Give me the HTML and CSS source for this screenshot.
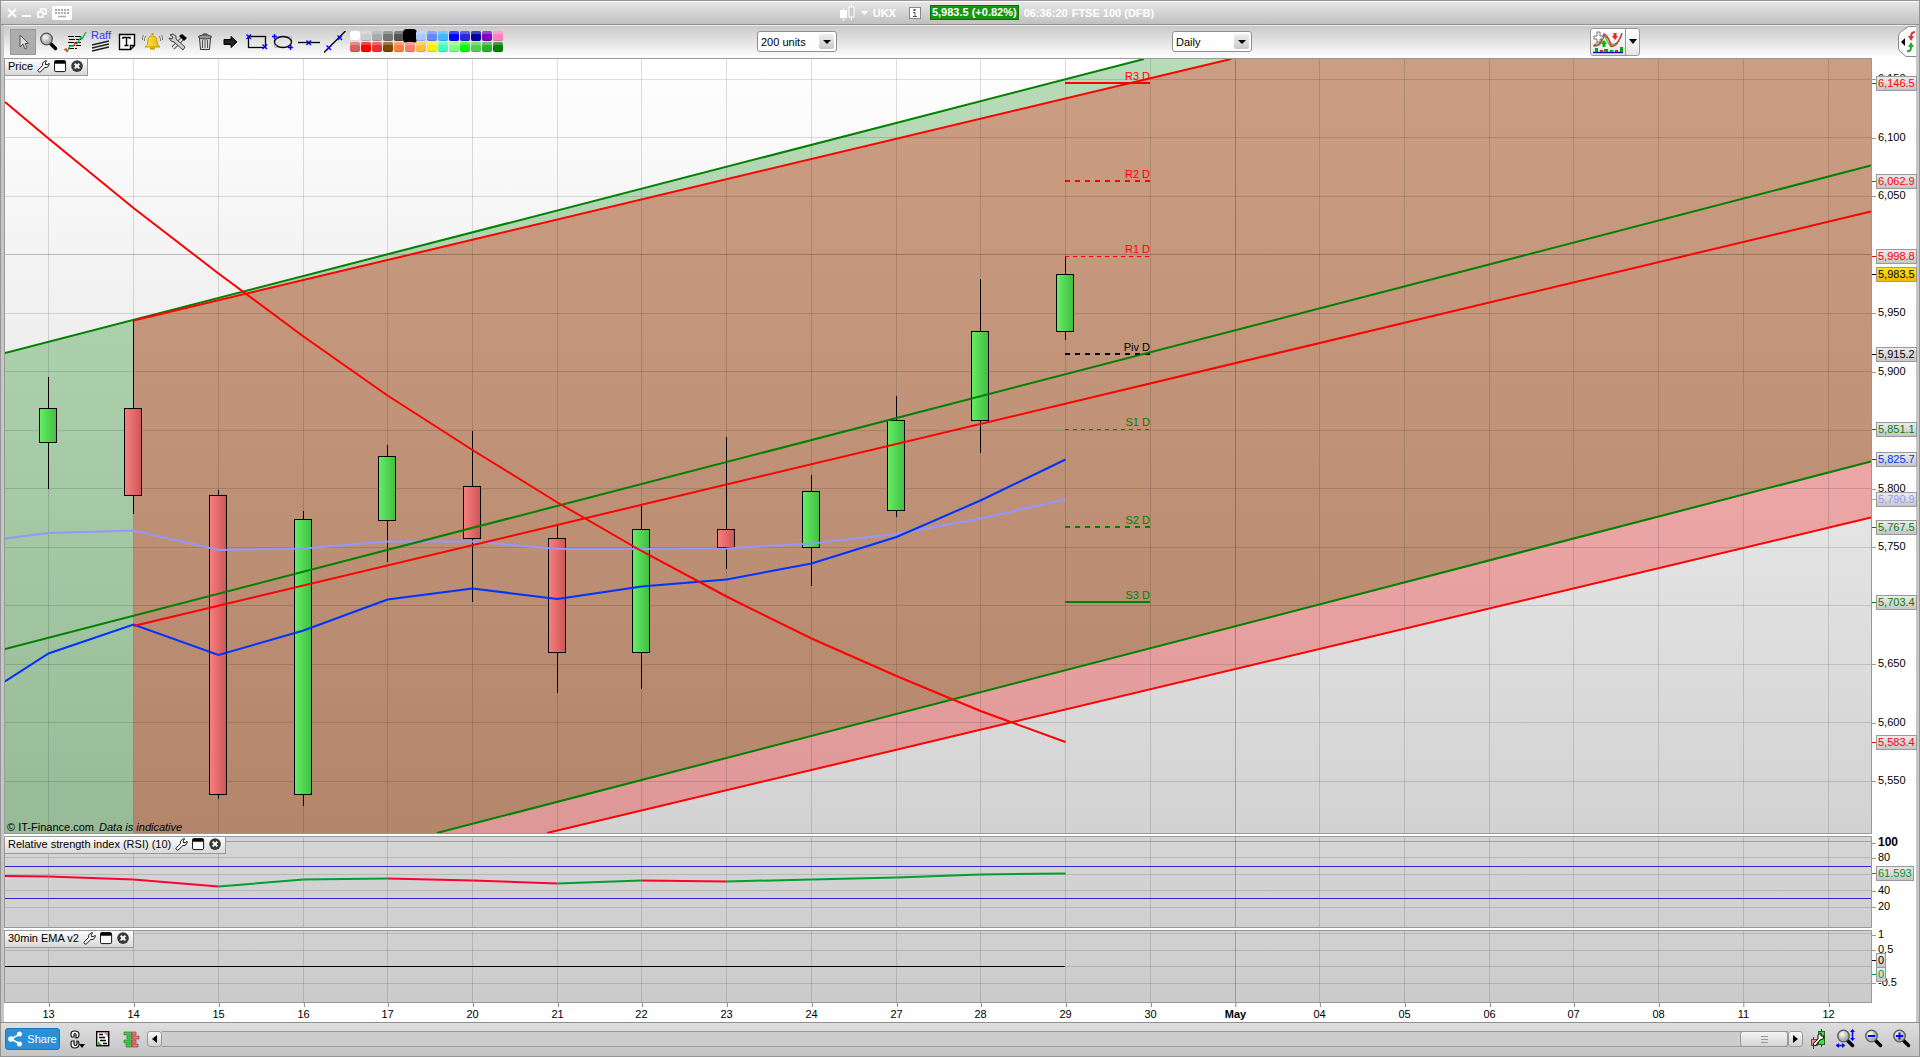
FILE: index.html
```html
<!DOCTYPE html>
<html lang="en">
<head>
  <meta charset="UTF-8">
  <meta name="viewport" content="width=device-width, initial-scale=1.0">
  <title>FTSE 100 (DFB)</title>
  <link rel="stylesheet" href="styles.css">
</head>
<body>
  <!-- shared icons -->
  <svg class="defs" width="0" height="0">
    <defs>
      <linearGradient id="up"><stop offset="0" stop-color="#66ee66"/><stop offset="1" stop-color="#40be40"/></linearGradient>
      <linearGradient id="down"><stop offset="0" stop-color="#fa8080"/><stop offset="1" stop-color="#cc5555"/></linearGradient>
      <radialGradient id="lens" cx=".4" cy=".35"><stop offset="0" stop-color="#fff"/><stop offset="1" stop-color="#aaa"/></radialGradient>
      <linearGradient id="gold" x1="0" x2="1"><stop offset="0" stop-color="#ffe45a"/><stop offset="1" stop-color="#eeb800"/></linearGradient>
      <symbol id="wrench" viewBox="0 0 14 14"><path d="M1.5 10.5L6 6V3.5L8.5 1H10.5L9 2.5V5H11.5L13 3.5V5.5L11 8H8.500L4 12.500Q2.500 13.500 1.500 12.500Q.5 11.500 1.500 10.500Z" fill="#fff" stroke="#000"/></symbol>
      <symbol id="pane" viewBox="0 0 14 14"><rect x=".5" y=".5" width="12" height="12" rx="1.500" fill="#fff" stroke="#000"/><path d="M1 1H12V4H1Z" fill="#000"/></symbol>
      <symbol id="close" viewBox="0 0 14 14"><circle cx="6.500" cy="6.500" r="6.300" fill="#3a3a3a"/><path d="M4 4L9 9M9 4L4 9" stroke="#fff" stroke-width="2.200"/></symbol>
      <symbol id="glass" viewBox="0 0 20 20"><path d="M11 11L16.500 16.500" stroke="#000" stroke-width="3.500" stroke-linecap="round"/><circle cx="7.500" cy="7" r="5.800" fill="url(#lens)" stroke="#555" stroke-width="1.300"/></symbol>
      <symbol id="cross" viewBox="0 0 6 6"><path d="M.5 .5L5 5M5 .5L.5 5" stroke="#00f" stroke-width="1.400"/></symbol>
    </defs>
  </svg>

  <div class="window">
    <header class="titlebar">
      <div class="winbtns">
        <button aria-label="Close"><svg width="10" height="10"><path d="M1 1L9 9M9 1L1 9" stroke="#fff" stroke-width="2"/></svg></button>
        <button aria-label="Minimize"><svg width="10" height="10"><path d="M0 8H9" stroke="#fff" stroke-width="2"/></svg></button>
        <button aria-label="Restore"><svg width="10" height="10" fill="none" stroke="#fff" stroke-width="1.500"><path d="M3.500 4V1H9V6H6"/><path d="M1 4H6V9H1Z"/></svg></button>
        <button aria-label="Keyboard"><svg width="20" height="14"><rect width="20" height="14" rx="2" fill="#fff"/><path d="M3 4H17M3 7H17" stroke="#aaa" stroke-width="2" stroke-dasharray="2 1"/><path d="M6 10.500H14" stroke="#aaa" stroke-width="1.500"/></svg></button>
      </div>
      <div class="quote">
        <svg width="16" height="17"><path d="M3.500 4V17M11.500 0V16" stroke="#fff"/><rect y="6" width="7" height="8" fill="#fff"/><rect x="9" y="3" width="5" height="10" fill="#ccc" stroke="#fff"/></svg>
        <svg class="down" width="7" height="4"><path d="M0 0H7L3.500 4Z" fill="#fff"/></svg>
        <span class="symbol">UKX</span>
        <svg class="info" width="12" height="12"><rect x=".5" y=".5" width="11" height="11" fill="#fff" stroke="#888"/><path d="M5.500 2V4" stroke="#555" stroke-width="2"/><path d="M4 5.500H6V9M4 9.500H8" fill="none" stroke="#555"/></svg>
        <span class="change">5,983.5 (+0.82%)</span>
        <span class="clock">06:36:20</span>
        <span>FTSE 100 (DFB)</span>
      </div>
    </header>

    <div class="toolbar">
      <div class="tools">
        <button class="tool on" aria-label="Pointer"><svg width="20" height="20"><path d="M7 3V15L10 12L12 17L14 16L12 11.500H15.500Z" fill="#ddd" stroke="#555"/></svg></button>
        <button class="tool" aria-label="Zoom"><svg width="20" height="20"><use href="#glass"/></svg></button>
        <button class="tool" aria-label="Chart list"><svg width="24" height="22"><path d="M5 5.500H19M6 8.500H18M5 11.500H19M6 14.500H18M5 17.500H14" stroke="#000" stroke-dasharray="6 1"/><path d="M1 19L3 18L4 21M11 15L12 12L14 13" fill="none" stroke="#f22" stroke-width="1.300"/><path d="M4 21L7 15L11 15M14 13L18 6L19 8L23 1" fill="none" stroke="#1b3" stroke-width="1.400"/></svg></button>
        <button class="tool raff" aria-label="Raff channel"><span>Raff</span><svg width="20" height="12"><path d="M1 5L18 1M1 8L18 4M1 11L18 7" stroke="#222" stroke-width="1.300"/></svg></button>
        <button class="tool" aria-label="Text"><svg width="18" height="18"><path d="M1.500 1.500H16.500V12.500L12.500 16.500H1.500Z" fill="#fff" stroke="#000" stroke-width="1.400"/><path d="M12.500 16.500V12.500H16.500M5 6V4.500H12V6M8.500 4.500V12M6.500 12.500H10.500" fill="none" stroke="#000" stroke-width="1.400"/></svg></button>
        <button class="tool" aria-label="Alert"><svg width="22" height="18"><path d="M3 14Q6 12 6 8Q6 3 10 3Q15 3 15 8Q15 12 18 14Z" fill="url(#gold)" stroke="#c90"/><path d="M8 15.500H13" stroke="#c90" stroke-width="2"/><path d="M9.500 1H11.500" stroke="#c90" stroke-width="2"/><path d="M4 3Q2 5 2.500 8M1.500 2Q0 4 .5 7M17 3Q19 5 18.500 8M19.500 2Q21 4 20.500 7" fill="none" stroke="#777"/></svg></button>
        <button class="tool" aria-label="Settings"><svg width="22" height="18"><path d="M5 15L14 6" stroke="#555" stroke-width="4"/><path d="M5 15L14 6" stroke="#eee" stroke-width="2"/><path d="M2 2L5 1L8 3V6L17 14L15 17L6 9L3 8L1 5L4 6L5 4Z" fill="#ccc" stroke="#444"/><path d="M11 3L14 1L19 5L16 8L13 5Z" fill="#000"/></svg></button>
        <button class="tool" aria-label="Delete"><svg width="16" height="18"><path d="M2.500 5L3.500 16.500H12.500L13.500 5" fill="#ddd" stroke="#333"/><path d="M5.500 7V15M8 7V15M10.500 7V15" stroke="#555"/><ellipse cx="8" cy="4" rx="6.500" ry="2" fill="#999" stroke="#333"/><path d="M6 2V1H10V2" fill="none" stroke="#333"/></svg></button>
        <button class="tool" aria-label="Arrow"><svg width="16" height="12"><path d="M1 3.500H8V.5L14 6L8 11.500V8.500H1Z" fill="#222" stroke="#000"/></svg></button>
        <button class="tool" aria-label="Rectangle"><svg width="22" height="16"><rect x="2.500" y="2.500" width="17" height="11" fill="none" stroke="#000" stroke-width="1.300"/><use href="#cross" width="6" height="6"/><use href="#cross" x="16" y="10" width="6" height="6"/></svg></button>
        <button class="tool" aria-label="Ellipse"><svg width="22" height="16"><path d="M2.500 2.500H19.500V13.500H2.500Z" fill="none" stroke="#bbb"/><ellipse cx="11" cy="8" rx="8.500" ry="5.500" fill="none" stroke="#000" stroke-width="1.300"/><path d="M0 2.500H5M2.500 0V5M16 13.500H21M18.500 11V16" stroke="#00f" stroke-width="1.300"/></svg></button>
        <button class="tool" aria-label="Horizontal line"><svg width="22" height="16"><path d="M0 8.500H22" stroke="#000" stroke-width="1.300"/><use href="#cross" x="8" y="6" width="6" height="6"/></svg></button>
        <button class="tool" aria-label="Trend line"><svg width="22" height="22"><path d="M0 21.500L21.500 0" stroke="#000" stroke-width="1.300"/><use href="#cross" x="2" y="14" width="6" height="6"/><use href="#cross" x="13" y="4" width="6" height="6"/></svg></button>
        <div class="palette" id="palette"></div>
      </div>
      <label class="pick"><select aria-label="Units"><option>200 units</option></select><i></i></label>
      <label class="pick"><select aria-label="Interval"><option>Daily</option></select><i></i></label>
      <div class="right">
        <div class="split">
          <button aria-label="Indicators"><svg width="32" height="24"><path d="M1 16Q7 18 12 5Q15 12 19 17Q25 16 30 4Q26 16 19 14Q16 5 11 7Q6 12 1 16" fill="#bdb" stroke="#3a3"/><path d="M2 15Q9 18 12 4Q16 5 19 16Q25 18 30 3" fill="none" stroke="#d33" stroke-width="1.400"/><path d="M5 2H8V6H11V9H8V12H5V9H2V6H5Z" fill="#fff" stroke="#777"/><path d="M23 3V7" stroke="#e22" stroke-width="3"/><path d="M20 6H26L23 10Z" fill="#e22"/><path d="M12 13V17" stroke="#0b0" stroke-width="3"/><path d="M9 14H15L12 10Z" fill="#0b0"/><path d="M1 22.500H31" stroke="#11b" stroke-width="1.500"/><path d="M3 18H6V22H3ZM12 19H16V22H12ZM18 20H21V22H18ZM28 17H31V22H28Z" fill="#0a0"/><path d="M8 20H11V22H8ZM23 20H26V22H23Z" fill="#d22"/></svg></button>
          <button aria-label="More indicators"><svg width="8" height="5"><path d="M0 0H8L4 5Z"/></svg></button>
        </div>
        <button class="drawer" aria-label="Open panel"><svg width="18" height="31"><path d="M18 .5H10.500L4 5Q.5 7 .5 10V22Q.5 25 4 27L8 30.500H18" fill="#fff" stroke="#888"/><path d="M7 12V20L3 16Z"/><path d="M17 6Q13 6 13 11" fill="none" stroke="#d33" stroke-width="2"/><path d="M10 10H16L13 15Z" fill="#d33"/><path d="M9 25Q13 26 13 21" fill="none" stroke="#2a2" stroke-width="2"/><path d="M10 21H16L13 16Z" fill="#2a2"/></svg></button>
      </div>
    </div>

    <main class="panes">
      <section class="pane price">
        <div class="plot">
          <svg id="priceSvg" viewBox="5 59 1866 774" preserveAspectRatio="none"></svg>
          <div id="pivots"></div>
          <div class="head">Price <svg><use href="#wrench"/></svg><svg><use href="#pane"/></svg><svg><use href="#close"/></svg></div>
          <p class="credit">© IT-Finance.com <em>Data is indicative</em></p>
        </div>
        <div class="axis" id="priceAxis"></div>
      </section>
      <section class="pane rsi">
        <div class="plot">
          <svg id="rsiSvg" viewBox="5 837 1866 90" preserveAspectRatio="none"></svg>
          <div class="head">Relative strength index (RSI) (10) <svg><use href="#wrench"/></svg><svg><use href="#pane"/></svg><svg><use href="#close"/></svg></div>
        </div>
        <div class="axis" id="rsiAxis"></div>
      </section>
      <section class="pane ema">
        <div class="plot">
          <svg id="emaSvg" viewBox="5 931 1866 71" preserveAspectRatio="none"></svg>
          <div class="head">30min EMA v2 <svg><use href="#wrench"/></svg><svg><use href="#pane"/></svg><svg><use href="#close"/></svg></div>
        </div>
        <div class="axis" id="emaAxis"></div>
      </section>
      <div class="dates" id="dates"></div>
    </main>

    <footer class="statusbar">
      <button class="share"><svg width="14" height="16"><path d="M12 3L3 8L12 13" fill="none" stroke="#fff" stroke-width="1.500"/><circle cx="11.500" cy="3" r="2.500" fill="#fff"/><circle cx="3" cy="8" r="2.800" fill="#fff"/><circle cx="11.500" cy="13" r="2.500" fill="#fff"/></svg>Share</button>
      <button class="link" aria-label="Link charts"><svg width="16" height="19"><g fill="#fff" stroke="#111" stroke-width="1.200"><path d="M2 7Q1 7 1 4Q1 1 4.500 1Q9 1 9 4.500Q9 8 6 8V4.500Q6 3.500 5 3.500Q4 3.500 4 5V7Z"/><path d="M2 11Q1 11 1 14Q1 18 4.500 18Q9 18 9 14Q9 11 7 11V14Q7 15.500 5.500 15.500Q4 15.500 4 14V11Z"/></g><path d="M9 14H15L12 18Z"/></svg></button>
      <button class="report" aria-label="Report"><svg width="14" height="16"><rect x=".7" y=".7" width="12" height="14" fill="#fff" stroke="#000" stroke-width="1.400"/><path d="M3 3.500H7M3 6.500H9M4 9.500H10M7 12.500H11" stroke="#000" stroke-width="1.500"/><path d="M8 2H12V6Z" fill="#f77"/><path d="M2 10L6 14H2Z" fill="#3b3"/></svg></button>
      <button class="book" aria-label="Order book"><svg width="17" height="17"><path d="M1 1H9V4H1ZM4 5H9V8H4ZM1 9H9V12H1ZM3 13H9V16H3Z" fill="#4c4" stroke="#373" stroke-width=".7"/><path d="M9 1H13V4H9ZM9 5H16V8H9ZM9 9H13V12H9ZM9 13H15V16H9Z" fill="#e77" stroke="#844" stroke-width=".7"/></svg></button>
      <div class="scroll">
        <button aria-label="Scroll left"><svg width="5" height="8"><path d="M5 0V8L0 4Z"/></svg></button>
        <div class="track"><div class="thumb"></div></div>
        <button aria-label="Scroll right"><svg width="5" height="8"><path d="M0 0V8L5 4Z"/></svg></button>
      </div>
      <div class="zooms">
        <button aria-label="Chart settings"><svg width="18" height="20"><path d="M3.500 8V20M11.500 0V18" stroke="#333"/><rect x="1.500" y="10.500" width="6" height="6" fill="#e88" stroke="#744"/><rect x="8.500" y="2.500" width="6" height="13" fill="#4d4" stroke="#262"/><path d="M3 15L8 10V6L11 4V7H14L13 10L10 11L5 17Z" fill="#fff" stroke="#000"/></svg></button>
        <button aria-label="Fit"><svg width="20" height="20"><use href="#glass"/><path d="M0 16.500H9M16.500 1V11" stroke="#00f" stroke-width="1.500"/><path d="M3 14V19L0 16.500ZM6 14V19L9 16.500ZM14 3H19L16.500 0ZM14 9H19L16.500 12Z" fill="#00f"/></svg></button>
        <button aria-label="Zoom out"><svg width="20" height="20"><use href="#glass"/><path d="M4 7H11" stroke="#00f" stroke-width="2"/></svg></button>
        <button aria-label="Zoom in"><svg width="20" height="20"><use href="#glass"/><path d="M4 7H11M7.500 3.500V10.500" stroke="#00f" stroke-width="2"/></svg></button>
      </div>
    </footer>
  </div>
  <script src="chart.js"></script>
</body>
</html>
```

FILE: styles.css
```css
*{margin: 0; padding: 0; box-sizing: border-box;}
body{
  height: 100vh;
  font-family: "Liberation Sans", Arial, sans-serif;
  font-size: 11px;
  color: #000;
}
button{
  border: 0;
  background: none;
  font: inherit;
  display: flex;
  align-items: center;
  justify-content: center;
}
svg{display: block; flex: none;}
.defs{position: absolute;}
.window{
  height: 100vh;
  display: flex;
  flex-direction: column;
  border: 1px solid #949494;
  padding: 0 3px;
  background: #c6c6c6;
}

/* title bar */
.titlebar{
  height: 24px;
  margin: 0 -3px;
  padding: 0 3px 1px;
  display: grid;
  grid-template-columns: 837fr auto 763fr;
  align-items: center;
  background: linear-gradient(#e6e6e6, #c0c0c0);
  border-top: 1px solid #fff;
  border-bottom: 1px solid #8f8f8f;
}
.winbtns{
  display: flex;
  align-items: center;
  gap: 5px;
  padding-left: 3px;
}
.quote{
  display: flex;
  align-items: center;
  color: #fff;
  font-weight: bold;
}
.down{margin: 0 5px;}
.info{margin: 0 9px 0 13px;}
.change{
  height: 15px;
  line-height: 13px;
  padding: 0 1px;
  background: #149614;
  border: 1px solid #087008;
}
.clock{margin: 0 4px 0 5px;}

/* toolbar */
.toolbar{
  height: 33px;
  padding-bottom: 2px;
  display: grid;
  grid-template-columns: 753fr 415fr 418fr 326fr;
  align-items: center;
  background: linear-gradient(#c9c9c9, #fff);
  border-top: 1px solid #eee;
}
.tools{
  display: flex;
  align-items: center;
  padding-left: 6px;
}
.tool{width: 26px; height: 26px;}
.tool.on{background: #adadad; border: 1px solid #999;}
.raff{
  flex-direction: column;
  color: #33f;
  line-height: 9px;
}
.palette{
  display: grid;
  grid-template-columns: repeat(14, 10px);
  gap: 1px;
  margin-left: 2px;
}
.palette i{
  height: 10px;
  border-radius: 2px;
  box-shadow: inset 0 3px rgba(255,255,255,.25), inset 0 -1px rgba(0,0,0,.15);
}
.palette i.on{box-shadow: 0 0 0 2px #000;}
.pick{
  position: relative;
  justify-self: start;
}
.pick select{
  display: block;
  appearance: none;
  width: 80px;
  height: 21px;
  padding-left: 3px;
  font: inherit;
  color: #000;
  background: #fff;
  border: 1px solid #909090;
  border-radius: 3px;
}
.pick i{
  position: absolute;
  right: 3px;
  top: 3px;
  width: 15px;
  height: 15px;
  border-radius: 2px;
  background: linear-gradient(#f0f0f0, #c8c8c8);
  pointer-events: none;
}
.pick i::after{
  content: "";
  position: absolute;
  left: 4px;
  top: 6px;
  border: 4px solid transparent;
  border-top-color: #000;
  border-bottom: 0;
}
.right{
  display: flex;
  align-items: center;
  justify-content: space-between;
}
.split{
  height: 28px;
  display: flex;
  border: 1px solid #999;
  border-radius: 3px;
  background: linear-gradient(#fff, #e6e6e6);
}
.split button{padding: 0 1px;}
.split button + button{
  width: 14px;
  border-left: 1px solid #999;
}

/* charts */
.panes{
  flex: 1;
  min-height: 0;
  display: flex;
  flex-direction: column;
  gap: 2px;
  background: #fff;
}
.pane{display: flex;}
.price{flex: 1; min-height: 0;}
.rsi{height: 92px;}
.ema{height: 73px;}
.plot{
  flex: 1;
  position: relative;
  border: 1px solid #999;
  background: linear-gradient(#fff, #d2d2d2);
}
.rsi .plot{background: linear-gradient(#d5d5d5, #d0d0d0);}
.ema .plot{background: linear-gradient(#d1d1d1, #cbcbcb);}
.plot > svg{
  position: absolute;
  width: 100%;
  height: 100%;
}
.grid{stroke: rgba(0,0,0,.13);}
.grid.major{stroke: rgba(0,0,0,.24);}
.line{fill: none; stroke-width: 2;}
.axis{
  width: 44px;
  position: relative;
}
.head{
  position: absolute;
  left: 0;
  top: 0;
  height: 17px;
  display: flex;
  align-items: center;
  gap: 4px;
  padding: 0 3px 2px;
  background: linear-gradient(#fdfdfd, #d8d8d8);
  border-right: 1px solid #999;
  border-bottom: 1px solid #999;
}
.head svg{width: 13px; height: 13px;}
.credit{
  position: absolute;
  left: 2px;
  bottom: 0;
}
.credit em{margin-left: 2px;}
.pivot{
  position: absolute;
  margin-top: -1px;
  line-height: 12px;
  transform: translate(-100%, -100%);
}
.mark{
  position: absolute;
  left: 6px;
  height: 14px;
  line-height: 14px;
  margin-top: -8px;
}
.mark.bold{font-size: 12px; font-weight: bold;}
.mark::before, .tag::before{
  content: "";
  position: absolute;
  left: -6px;
  top: 8px;
  width: 4px;
  height: 1px;
  background: #999;
}
.tag{
  position: absolute;
  left: 4px;
  height: 15px;
  line-height: 13px;
  margin-top: -7px;
  padding: 0 1px;
  background: linear-gradient(#ececec, #c6c6c6);
  border: 1px solid #999;
}
.tag::before{
  left: -5px;
  top: 6px;
  background: currentColor;
}
.tag.last{background: linear-gradient(#ffe21a, #f2b900);}
.dates{
  height: 17px;
  position: relative;
}
.dates span{
  position: absolute;
  top: 2px;
  line-height: 14px;
  transform: translateX(-50%);
}
.dates span::before{
  content: "";
  position: absolute;
  left: 50%;
  top: -4px;
  width: 1px;
  height: 4px;
  background: #888;
}

/* bottom bar */
.statusbar{
  height: 34px;
  margin: 0 -3px;
  padding: 0 7px 1px 4px;
  display: flex;
  align-items: center;
  background: linear-gradient(#dedede, #c4c4c4);
  border-top: 1px solid #8f8f8f;
}
.share{
  width: 55px;
  height: 22px;
  gap: 5px;
  color: #fff;
  background: #2b8fd8;
  border: 1px solid #1d78bd;
  border-radius: 3px;
}
.link, .report{margin-left: 10px;}
.book{margin-left: 13px;}
.scroll{
  flex: 1;
  height: 16px;
  display: flex;
  margin: 0 7px;
}
.scroll button, .thumb{
  width: 15px;
  background: linear-gradient(#fafafa, #d0d0d0);
  border: 1px solid #999;
  border-radius: 3px;
}
.track{
  flex: 1;
  display: flex;
  justify-content: flex-end;
  background: #cdcdcd;
  border: solid #999;
  border-width: 1px 0;
}
.thumb{
  width: 48px;
  margin: -1px 0;
  background: linear-gradient(#999, #999) center 4px / 7px 1px no-repeat,
    linear-gradient(#999, #999) center 7px / 7px 1px no-repeat,
    linear-gradient(#999, #999) center 10px / 7px 1px no-repeat,
    linear-gradient(#f4f4f4, #d4d4d4);
}
.zooms{
  display: flex;
  gap: 8px;
}
```

FILE: chart.js
```js
const days = [
  ["13", 48.5], ["14", 133.5], ["15", 218.5], ["16", 303.5], ["17", 387.5], ["20", 472.5],
  ["21", 557.5], ["22", 641.5], ["23", 726.5], ["24", 811.5], ["27", 896.5], ["28", 980.5],
  ["29", 1065.5], ["30", 1150.5], ["May", 1235.5], ["04", 1319.5], ["05", 1404.5], ["06", 1489.5],
  ["07", 1573.5], ["08", 1658.5], ["11", 1743.5], ["12", 1828.5]
];
// high, body top, body bottom, low, direction
const candles = [
  [377, 408, 442, 489, "up"], [320, 408, 495, 514, "down"], [490, 495, 794, 799, "down"],
  [511, 519, 794, 806, "up"], [445, 456, 520, 562, "up"], [431, 486, 538, 602, "down"],
  [526, 538, 652, 693, "down"], [506, 529, 652, 689, "up"], [437, 529, 547, 569, "down"],
  [475, 491, 547, 586, "up"], [396, 420, 510, 517, "up"], [279, 331, 420, 453, "up"],
  [257, 274, 331, 340, "up"]
];
const slow = [102, 138.5, 208, 273.5, 336.5, 395.5, 450, 502.5, 551, 596.5, 638.5, 676, 711, 742];
const mid = [538.5, 533, 530.5, 550, 548.5, 541.5, 541.5, 549, 549, 548.5, 543.5, 534, 518.5, 499.5];
const fast = [681.5, 653.5, 624.5, 655, 630.5, 599.5, 588.5, 599, 586.5, 579.5, 563.5, 537, 500.5, 459.5];
const rsi = [876, 876.5, 879.5, 886.5, 879.5, 878.5, 880.5, 883.5, 880.5, 881.5, 879.5, 877.5, 874.5, 873.5];
const rsiDir = "ddduudduduuuu".split("");

// name, price, line width, dash, colour
const pivots = [
  ["R3 D", 6146.5, 2, "", "#f00"], ["R2 D", 6062.9, 2, "5 5", "#f00"], ["R1 D", 5998.8, 1, "4 4", "#f00"],
  ["Piv D", 5915.2, 2, "5 5", "#000"], ["S1 D", 5851.1, 1, "4 4", "#008000"],
  ["S2 D", 5767.5, 2, "5 5", "#008000"], ["S3 D", 5703.4, 2, "", "#008000"]
];

const xs = [5].concat(days.map(d => d[1]));
const priceY = p => 79.3 + (6150 - p) * 1.17;
const rsiY = v => 841 + (100 - v) * .825;
const emaY = v => 966.5 - v * 33;
const crisp = y => Math.floor(y) + .5;
const points = list => list.map((y, i) => xs[i] + "," + y).join(" ");
const money = n => n.toLocaleString("en-US");

function gridLines(ys, top, bottom, strong){
  let s = "";
  days.forEach(([name, x]) => {
    s += `<path class="grid ${name === "May" ? "major" : ""}" d="M${x} ${top}V${bottom}"/>`;
  });
  ys.forEach(y => {
    s += `<path class="grid ${y === strong ? "major" : ""}" d="M5 ${crisp(y)}H1871"/>`;
  });
  return s;
}

function drawPrice(){
  const ys = [];
  for(let p = 6150; p >= 5550; p -= 50) ys.push(priceY(p));
  let s = "";
  // regression channels
  s += `<path d="M5 353L1144 59H1871V462L437 833H5Z" fill="rgba(0,128,0,.28)"/>`;
  s += `<path d="M133.500 320L1231 59H1871V518L547 833H133.500Z" fill="rgba(255,0,0,.28)"/>`;
  s += gridLines(ys, 59, 833, priceY(6000));
  candles.forEach(([hi, top, bottom, low, dir], i) => {
    const x = days[i][1];
    s += `<path d="M${x} ${hi}V${low}" stroke="#000"/>`;
    s += `<rect x="${x - 9}" y="${top + .5}" width="17" height="${bottom - top}" fill="url(#${dir})" stroke="#000"/>`;
  });
  s += `<polyline class="line" stroke="#9696ff" points="${points(mid)}"/>`;
  s += `<polyline class="line" stroke="#0032ff" points="${points(fast)}"/>`;
  pivots.forEach(([name, p, w, dash, color]) => {
    const y = w === 1 ? crisp(priceY(p)) : Math.round(priceY(p));
    s += `<path d="M1065 ${y}H1150" stroke="${color}" stroke-width="${w}" stroke-dasharray="${dash}"/>`;
  });
  s += `<path class="line" stroke="#008000" d="M5 353L1144 59M5 649L1871 165.500M437 833L1871 461.500"/>`;
  s += `<path class="line" stroke="#f00" d="M133.500 320.500L1231 59M133.500 626L1871 211.500M547 833L1871 517.500"/>`;
  s += `<polyline class="line" stroke="#f00" points="${points(slow)}"/>`;
  document.querySelector("#priceSvg").innerHTML = s;

  document.querySelector("#pivots").innerHTML = pivots.map(([name, p, w, dash, color]) =>
    `<span class="pivot" style="left:${(1150 - 5) / 18.66}%;top:${(priceY(p) - 59) / 7.74}%;color:${color}">${name}</span>`
  ).join("");
}

function drawRsi(){
  let s = gridLines([100, 80, 60, 40, 20].map(rsiY), 837, 927, rsiY(100));
  s += `<path d="M5 866.500H1871M5 898.500H1871" stroke="#2a2ad0"/>`;
  rsiDir.forEach((d, i) => {
    s += `<path class="line" stroke="${d === "u" ? "#00a030" : "#ff0032"}" d="M${xs[i]} ${rsi[i]}L${xs[i + 1]} ${rsi[i + 1]}"/>`;
  });
  document.querySelector("#rsiSvg").innerHTML = s;
}

function drawEma(){
  let s = gridLines([1, .5, 0, -.5].map(emaY), 931, 1002);
  s += `<path d="M5 966.500H1065" stroke="#000"/>`;
  document.querySelector("#emaSvg").innerHTML = s;
}

// axis labels: marks are plain ticks, tags are boxed values
function drawAxis(id, top, height, marks, tags){
  const pos = y => `top:${(y - top) / height * 100}%`;
  document.querySelector(id).innerHTML =
    marks.map(([text, y, cls]) => `<span class="mark ${cls || ""}" style="${pos(y)}">${text}</span>`).join("") +
    tags.map(([text, y, color, cls]) => `<span class="tag ${cls || ""}" style="${pos(y)};color:${color}">${text}</span>`).join("");
}

drawPrice();
drawRsi();
drawEma();

const priceMarks = [];
for(let p = 6150; p >= 5550; p -= 50){
  if(p !== 6000 && p !== 5850 && p !== 5700) priceMarks.push([money(p), priceY(p)]);
}
const priceTags = pivots.map(([name, p, w, dash, color]) => [money(p), priceY(p), color]);
priceTags.push(["5,983.5", priceY(5983.5), "#000", "last"], ["5,825.7", priceY(5825.7), "#0032ff"],
  ["5,790.9", priceY(5790.9), "#9696ff"], ["5,583.4", priceY(5583.4), "#f00"]);
drawAxis("#priceAxis", 58, 776, priceMarks, priceTags);
drawAxis("#rsiAxis", 836, 92, [["100", 843, "bold"], ["80", rsiY(80)], ["40", rsiY(40)], ["20", rsiY(20)]],
  [["61.593", rsiY(61.593), "#00962d"]]);
drawAxis("#emaAxis", 930, 73, [["1", emaY(1) + 1], ["0.5", emaY(.5)], ["-0.5", emaY(-.5)]],
  [["0", 960, "#000"], ["0", 974, "#00962d"]]);

document.querySelector("#dates").innerHTML = days.map(([name, x]) =>
  `<span style="left:${(x - 4) / 19.12}%">${name === "May" ? "<b>May</b>" : name}</span>`
).join("");

// drawing colours
const colors = ["#fff", "#ccc", "#aaa", "#777", "#555", "#000", "#aac8ff", "#6688ff", "#40b8ff", "#00f", "#2828dc", "#0000a0", "#8000c0", "#ff80c0",
  "#dc6060", "#f00", "#f03030", "#7d4600", "#ff8040", "#ff8070", "#ffbe40", "#ffee00", "#40ffc0", "#80ff80", "#00ff00", "#50d050", "#30b030", "#008000"];
document.querySelector("#palette").innerHTML = colors.map((c, i) =>
  `<i class="${i === 5 ? "on" : ""}" style="background-color:${c}"></i>`
).join("");
```
